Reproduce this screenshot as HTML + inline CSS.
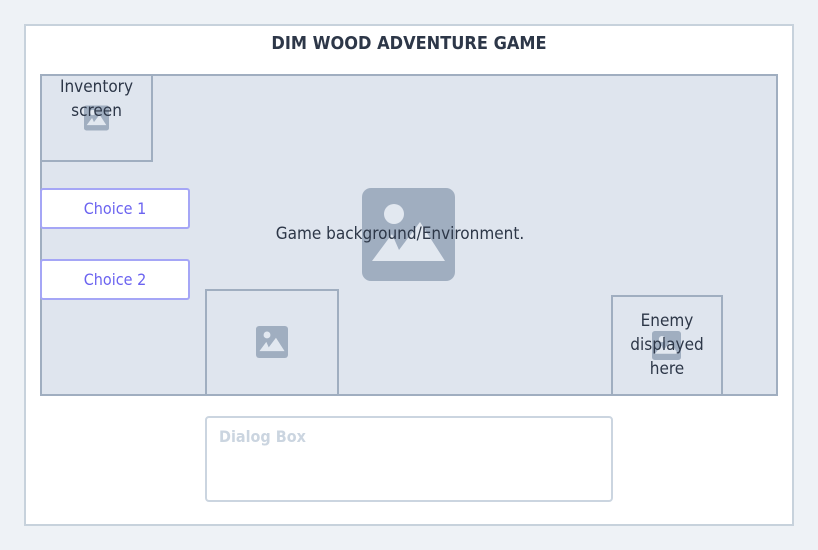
<!DOCTYPE html>
<html><head><meta charset="utf-8"><style>
*{margin:0;padding:0;box-sizing:border-box}
body{width:818px;height:550px;background:#eef2f6;font-family:"DejaVu Sans Condensed","Liberation Sans",sans-serif;position:relative;overflow:hidden;color:#2d3748}
.a{position:absolute}
.card{left:24px;top:24px;width:770px;height:502px;background:#fff;border:2px solid #c7d2dc}
.title{left:24px;width:770px;top:33px;text-align:center;font-weight:bold;font-size:18px;color:#2d3748}
.game{left:40px;top:74px;width:738px;height:322px;background:#dfe5ee;border:2px solid #a0aec0}
.box{border:2px solid #a0aec0;background:#dfe5ee}
.btn{background:#fff;border:2px solid #a5a6f6;border-radius:3px;color:#6b63f0;font-size:16px;text-align:center;line-height:37px}
.txt{font-size:17px;text-align:center;line-height:24px;color:#2d3748}
svg{position:absolute;display:block}
</style></head><body>
<div class="a card"></div>
<div class="a title">DIM WOOD ADVENTURE GAME</div>
<div class="a game"></div>
<svg style="left:362px;top:188px" width="93" height="93" viewBox="0 0 93 93"><rect width="93" height="93" rx="9" fill="#a0aec0"/><circle cx="32" cy="26" r="10" fill="#e2e8f0"/><polygon points="10,73 30,46 37,62 58,34 83,73" fill="#e2e8f0"/></svg>
<div class="a txt" style="left:200px;width:400px;top:222px">Game background/Environment.</div>
<div class="a box" style="left:40px;top:74px;width:113px;height:88px"></div>
<svg style="left:84px;top:105px" width="25" height="26" viewBox="0 0 93 93"><rect width="93" height="93" rx="9" fill="#a0aec0"/><circle cx="32" cy="26" r="10" fill="#e2e8f0"/><polygon points="10,73 30,46 37,62 58,34 83,73" fill="#e2e8f0"/></svg>
<div class="a txt" style="left:40px;width:113px;top:75px">Inventory<br>screen</div>
<div class="a btn" style="left:40px;top:188px;width:150px;height:41px">Choice 1</div>
<div class="a btn" style="left:40px;top:259px;width:150px;height:41px">Choice 2</div>
<div class="a box" style="left:205px;top:289px;width:134px;height:107px"></div>
<svg style="left:256px;top:326px" width="32" height="32" viewBox="0 0 93 93"><rect width="93" height="93" rx="9" fill="#a0aec0"/><circle cx="32" cy="26" r="10" fill="#e2e8f0"/><polygon points="10,73 30,46 37,62 58,34 83,73" fill="#e2e8f0"/></svg>
<div class="a box" style="left:611px;top:295px;width:112px;height:101px"></div>
<svg style="left:652px;top:331px" width="29" height="29" viewBox="0 0 93 93"><rect width="93" height="93" rx="9" fill="#a0aec0"/><circle cx="32" cy="26" r="10" fill="#e2e8f0"/><polygon points="10,73 30,46 37,62 58,34 83,73" fill="#e2e8f0"/></svg>
<div class="a txt" style="left:611px;width:112px;top:309px">Enemy<br>displayed<br>here</div>
<div class="a" style="left:40px;top:394px;width:738px;height:2px;background:#a0aec0"></div>
<div class="a" style="left:205px;top:416px;width:408px;height:86px;border:2px solid #cbd5e0;border-radius:4px;background:#fff"></div>
<div class="a" style="left:219px;top:427px;font-size:16px;font-weight:bold;color:#cbd5e0">Dialog Box</div>
</body></html>
